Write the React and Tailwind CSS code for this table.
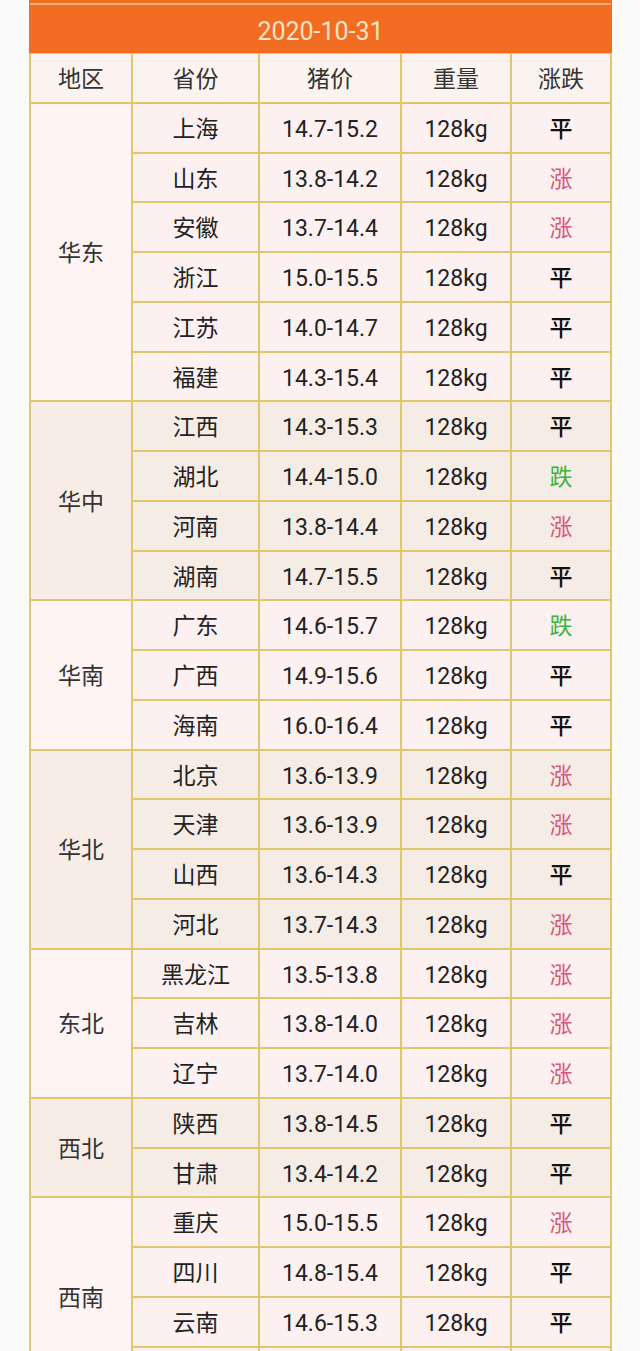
import React from "react";

const groups = [
  { region: "华东", rows: [
    ["上海", "14.7-15.2", "平"],
    ["山东", "13.8-14.2", "涨"],
    ["安徽", "13.7-14.4", "涨"],
    ["浙江", "15.0-15.5", "平"],
    ["江苏", "14.0-14.7", "平"],
    ["福建", "14.3-15.4", "平"],
  ]},
  { region: "华中", rows: [
    ["江西", "14.3-15.3", "平"],
    ["湖北", "14.4-15.0", "跌"],
    ["河南", "13.8-14.4", "涨"],
    ["湖南", "14.7-15.5", "平"],
  ]},
  { region: "华南", rows: [
    ["广东", "14.6-15.7", "跌"],
    ["广西", "14.9-15.6", "平"],
    ["海南", "16.0-16.4", "平"],
  ]},
  { region: "华北", rows: [
    ["北京", "13.6-13.9", "涨"],
    ["天津", "13.6-13.9", "涨"],
    ["山西", "13.6-14.3", "平"],
    ["河北", "13.7-14.3", "涨"],
  ]},
  { region: "东北", rows: [
    ["黑龙江", "13.5-13.8", "涨"],
    ["吉林", "13.8-14.0", "涨"],
    ["辽宁", "13.7-14.0", "涨"],
  ]},
  { region: "西北", rows: [
    ["陕西", "13.8-14.5", "平"],
    ["甘肃", "13.4-14.2", "平"],
  ]},
  { region: "西南", rows: [
    ["重庆", "15.0-15.5", "涨"],
    ["四川", "14.8-15.4", "平"],
    ["云南", "14.6-15.3", "平"],
    ["", "", ""],
  ]},
];

function Trend({ t }) {
  if (t === "涨") return <span className="text-[#d9557a]">涨</span>;
  if (t === "跌") return <span className="text-[#3bb53b]">跌</span>;
  if (t === "平") return <span className="text-[#111] font-medium">平</span>;
  return null;
}

export default function App() {
  let rowIndex = 2;
  const cells = [];
  groups.forEach((g, gi) => {
    const beige = gi % 2 === 1;
    const cellBg = beige ? "bg-[#f6ece6]" : "bg-[#fcf1f0]";
    const regionBg = beige ? "bg-[#f7ede6]" : "bg-[#fdf4f3]";
    cells.push(
      <div
        key={"r" + gi}
        className={`${regionBg} flex items-center justify-center pt-[5px] text-[#333]`}
        style={{ gridRow: `${rowIndex} / span ${g.rows.length}`, gridColumn: "1" }}
      >
        {g.region}
      </div>
    );
    g.rows.forEach((r, ri) => {
      const row = rowIndex + ri;
      const empty = r[0] === "";
      cells.push(
        <div key={`p${gi}-${ri}`} className={`${cellBg} flex items-center justify-center pt-[5px] text-[#222]`} style={{ gridRow: row, gridColumn: "2" }}>{r[0]}</div>,
        <div key={`v${gi}-${ri}`} className={`${cellBg} flex items-center justify-center pt-[5px] text-[#222]`} style={{ gridRow: row, gridColumn: "3" }}>{r[1]}</div>,
        <div key={`w${gi}-${ri}`} className={`${cellBg} flex items-center justify-center pt-[5px] text-[#222]`} style={{ gridRow: row, gridColumn: "4" }}>{empty ? "" : "128kg"}</div>,
        <div key={`t${gi}-${ri}`} className={`${cellBg} flex items-center justify-center pt-[5px]`} style={{ gridRow: row, gridColumn: "5" }}><Trend t={r[2]} /></div>
      );
    });
    rowIndex += g.rows.length;
  });

  return (
    <div className="min-h-[1351px] bg-[#fafafa] font-['Roboto','Noto_Sans_CJK_SC',sans-serif] text-[23px]">
      <div className="ml-[29px] w-[583px]">
        <div className="bg-[#f26c22] pt-[3px] px-[1px]">
          <div className="h-[2px] bg-[#f8b078]" />
          <div className="h-[48px] flex items-center justify-center pt-[5px] text-[#fde3c6] text-[25px]">
            2020-10-31
          </div>
        </div>
        <div className="grid grid-cols-[100px_125px_140px_108px_98px] auto-rows-[47.75px] gap-[2px] p-[2px] pt-[1px] bg-[#e0c66c]">
          {["地区", "省份", "猪价", "重量", "涨跌"].map((h) => (
            <div key={h} className="bg-[#fbf3ef] flex items-center justify-center pt-[4px] text-[#333]">{h}</div>
          ))}
          {cells}
        </div>
      </div>
    </div>
  );
}
